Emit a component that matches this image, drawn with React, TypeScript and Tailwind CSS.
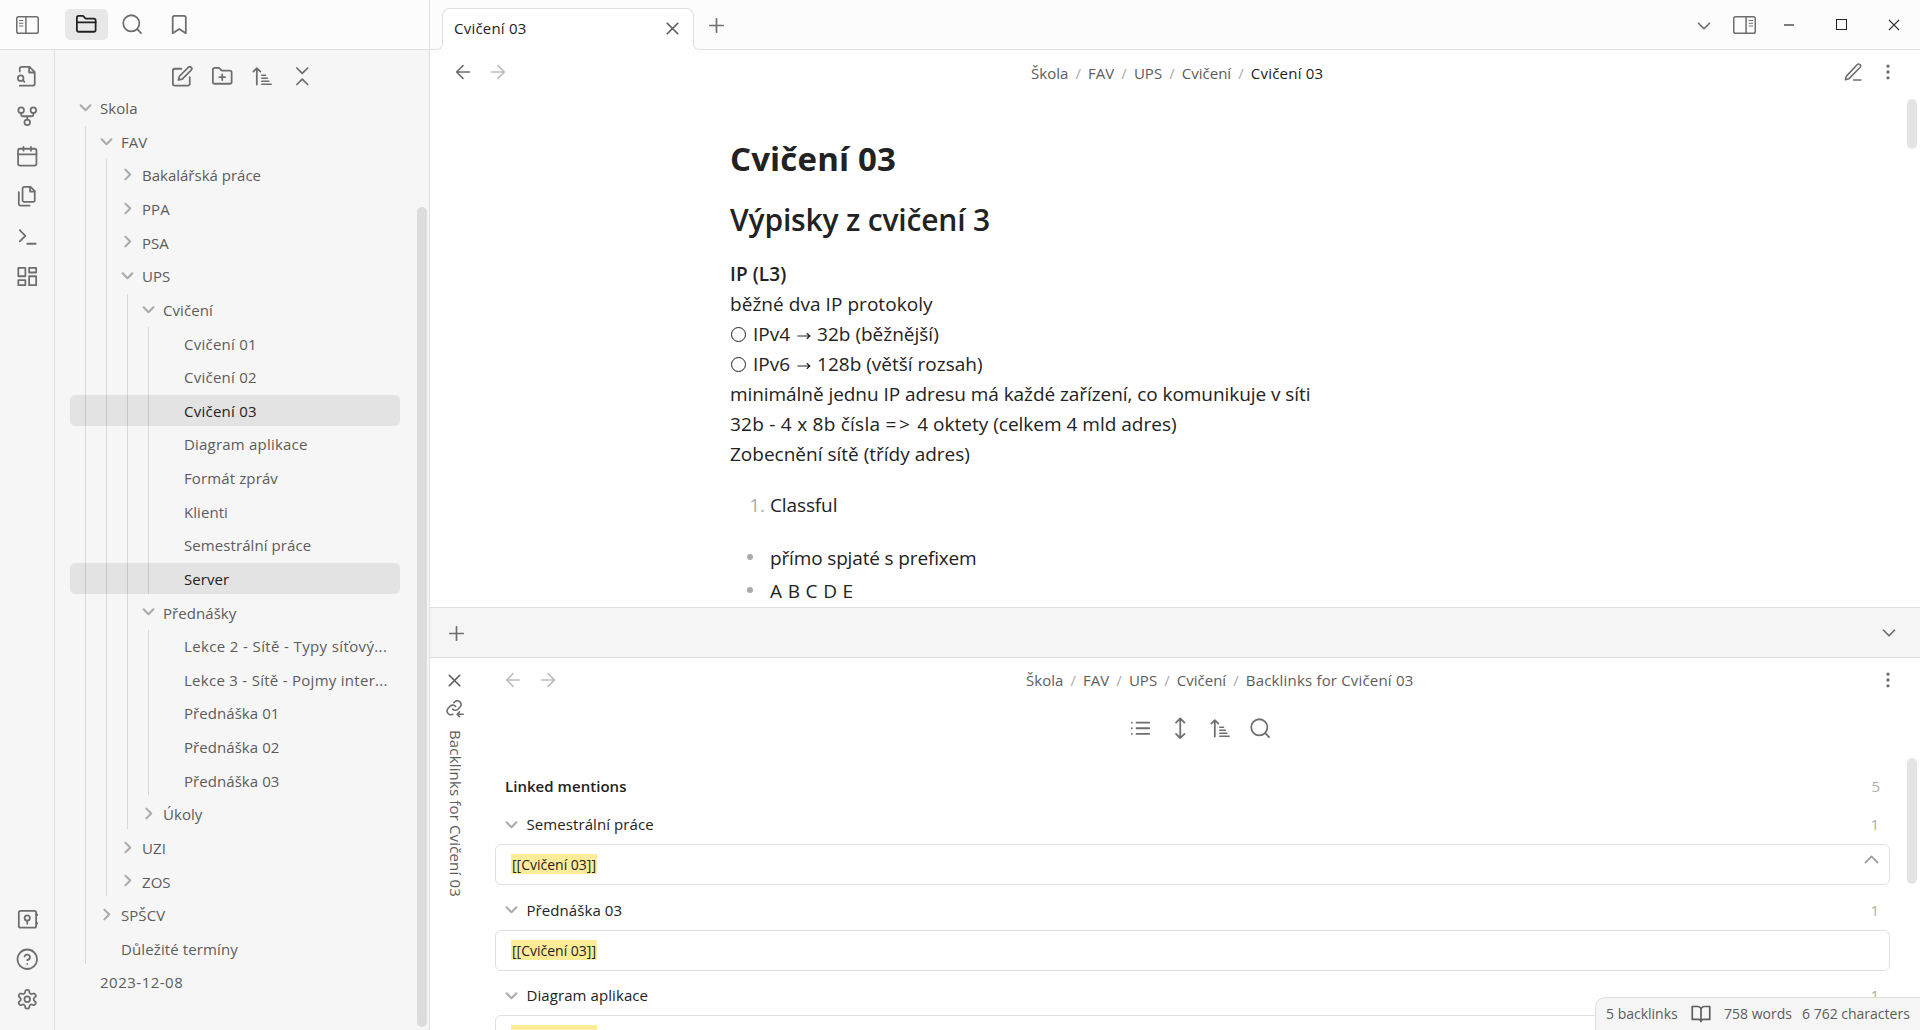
import React from "react";

type IconProps = { size?: number; sw?: number; className?: string; children: React.ReactNode };

/* Shared 24-unit stroked icon frame; sw is the stroke width in 24-unit space. */
function Icon({ size = 22.5, sw = 1.87, className = "", children }: IconProps) {
  return (
    <svg
      width={size}
      height={size}
      viewBox="0 0 24 24"
      fill="none"
      stroke="currentColor"
      strokeWidth={sw}
      strokeLinecap="round"
      strokeLinejoin="round"
      className={"shrink-0 " + className}
    >
      {children}
    </svg>
  );
}

const FOLDER =
  "M4 20h16a2 2 0 0 0 2-2V8a2 2 0 0 0-2-2h-7.93a2 2 0 0 1-1.66-.9l-.82-1.2A2 2 0 0 0 7.93 3H4a2 2 0 0 0-2 2v13c0 1.1.9 2 2 2Z";
const GEAR =
  "M12.22 2h-.44a2 2 0 0 0-2 2v.18a2 2 0 0 1-1 1.73l-.43.25a2 2 0 0 1-2 0l-.15-.08a2 2 0 0 0-2.73.73l-.22.38a2 2 0 0 0 .73 2.73l.15.1a2 2 0 0 1 1 1.72v.51a2 2 0 0 1-1 1.74l-.15.09a2 2 0 0 0-.73 2.73l.22.38a2 2 0 0 0 2.73.73l.15-.08a2 2 0 0 1 2 0l.43.25a2 2 0 0 1 1 1.73V20a2 2 0 0 0 2 2h.44a2 2 0 0 0 2-2v-.18a2 2 0 0 1 1-1.73l.43-.25a2 2 0 0 1 2 0l.15.08a2 2 0 0 0 2.73-.73l.22-.39a2 2 0 0 0-.73-2.73l-.15-.08a2 2 0 0 1-1-1.74v-.5a2 2 0 0 1 1-1.74l.15-.09a2 2 0 0 0 .73-2.73l-.22-.38a2 2 0 0 0-2.73-.73l-.15.08a2 2 0 0 1-2 0l-.43-.25a2 2 0 0 1-1-1.73V4a2 2 0 0 0-2-2z";

const SearchIcon = () => (
  <Icon>
    <circle cx="11" cy="11" r="8.6" />
    <path d="m21.4 21.4-4.2-4.2" />
  </Icon>
);
const SortIcon = () => (
  <Icon>
    <path d="m2.5 7 3.7-3.7L10 7M6.2 3.6v17.2" />
    <path d="M11.5 11h4M11.5 14.2h6M11.5 17.2h7.6M11.5 20.4h10" strokeWidth="1.6" />
  </Icon>
);
const CloseIcon = () => (
  <Icon size={21}>
    <path d="M18 6 6 18M6 6l12 12" />
  </Icon>
);
const PlusIcon = () => (
  <Icon size={23} sw={1.75}>
    <path d="M12 5v14M5 12h14" />
  </Icon>
);
const ChevronDown = () => (
  <Icon size={22}>
    <path d="m6 9 6 6 6-6" />
  </Icon>
);
const MoreIcon = () => (
  <Icon size={20} sw={2}>
    <circle cx="12" cy="12" r="1" fill="currentColor" />
    <circle cx="12" cy="5" r="1" fill="currentColor" />
    <circle cx="12" cy="19" r="1" fill="currentColor" />
  </Icon>
);
const ArrowLeft = ({ dim }: { dim?: boolean }) => (
  <Icon size={22} sw={1.75} className={dim ? "text-[#bdbdbd]" : "text-[#6e6e6e]"}>
    <path d="m12 19-7-7 7-7M19 12H5" />
  </Icon>
);
const ArrowRight = () => (
  <Icon size={22} sw={1.75} className="text-[#bdbdbd]">
    <path d="M5 12h14M12 5l7 7-7 7" />
  </Icon>
);
const Fold = ({ closed }: { closed?: boolean }) => (
  <Icon size={13} sw={3.9} className={"text-[#ababab] " + (closed ? "-rotate-90" : "")}>
    <path d="M3 8l9 9 9-9" />
  </Icon>
);
const PanelIcon = ({ right }: { right?: boolean }) => (
  <svg
    width="23"
    height="18"
    viewBox="0 0 23 18"
    fill="none"
    stroke="currentColor"
    className={right ? "-scale-x-100" : ""}
  >
    <rect x=".75" y=".75" width="21.5" height="16.5" rx="1.8" strokeWidth="1.5" />
    <path d="M9.9 1v16" strokeWidth="1.5" />
    <path d="M3 4.5h4.3M3 7.2h4.3M3 10h4.3" strokeWidth="1.1" />
  </svg>
);

type Node = {
  name: string;
  open?: boolean;
  closed?: boolean;
  selected?: boolean;
  spacing?: string;
  children?: Node[];
};

const TREE: Node[] = [
  {
    name: "Škola",
    open: true,
    children: [
      {
        name: "FAV",
        open: true,
        children: [
          { name: "Bakalářská práce", closed: true, spacing: "tracking-normal" },
          { name: "PPA", closed: true },
          { name: "PSA", closed: true },
          {
            name: "UPS",
            open: true,
            children: [
              {
                name: "Cvičení",
                open: true,
                children: [
                  { name: "Cvičení 01", spacing: "tracking-[0.25px]" },
                  { name: "Cvičení 02", spacing: "tracking-[0.25px]" },
                  { name: "Cvičení 03", selected: true, spacing: "tracking-[0.25px]" },
                  { name: "Diagram aplikace", spacing: "tracking-[0.2px]" },
                  { name: "Formát zpráv", spacing: "tracking-[0.12px]" },
                  { name: "Klienti" },
                  { name: "Semestrální práce", spacing: "tracking-[0.08px]" },
                  { name: "Server", selected: true },
                ],
              },
              {
                name: "Přednášky",
                open: true,
                children: [
                  { name: "Lekce 2 - Sítě - Typy síťový...", spacing: "tracking-[0.37px]" },
                  { name: "Lekce 3 - Sítě - Pojmy inter...", spacing: "tracking-[0.28px]" },
                  { name: "Přednáška 01" },
                  { name: "Přednáška 02" },
                  { name: "Přednáška 03" },
                ],
              },
              { name: "Úkoly", closed: true },
            ],
          },
          { name: "UZI", closed: true },
          { name: "ZOS", closed: true },
        ],
      },
      { name: "SPŠCV", closed: true },
      { name: "Důležité termíny", spacing: "tracking-[0.12px]" },
    ],
  },
  { name: "2023-12-08", spacing: "tracking-[0.5px]" },
];

function TreeItem({ node, depth }: { node: Node; depth: number }) {
  return (
    <div className="flex flex-col gap-[2.640px]">
      <div
        className={
          "flex h-[31px] items-center rounded-[5px] whitespace-nowrap " +
          (node.selected ? "bg-black/[0.075] text-[#222222]" : "text-[#5c5c5c]")
        }
        style={{ marginLeft: -21 * depth, paddingLeft: 8 + 21 * depth }}
      >
        <span className="flex w-[14px] justify-center">
          {(node.open || node.closed) && <Fold closed={node.closed} />}
        </span>
        <span className={"ml-[8px] pt-[1.500px] " + (node.spacing ?? "tracking-[0.06px]")}>{node.name}</span>
      </div>
      {node.children && (
        <div className="ml-[15px] flex flex-col gap-[2.640px] border-l border-[#d9d9d9] pl-[5px]">
          {node.children.map((c) => (
            <TreeItem key={c.name} node={c} depth={depth + 1} />
          ))}
        </div>
      )}
    </div>
  );
}

function Ribbon() {
  return (
    <nav className="flex w-[55px] shrink-0 flex-col items-center justify-between border-r border-[#e0e0e0] pt-[15.400px] pr-[0.500px] pb-[20px] text-[#6e6e6e]">
      <div className="flex flex-col gap-[17.500px]">
        <Icon>
          <path d="M4 22h14a2 2 0 0 0 2-2V7.5L14.5 2H6a2 2 0 0 0-2 2v3M14 2v6h6" />
          <circle cx="5" cy="14" r="3" />
          <path d="m9 18-1.5-1.5" />
        </Icon>
        <Icon>
          <circle cx="12" cy="18.5" r="3" />
          <circle cx="5.5" cy="5.5" r="3" />
          <circle cx="18.5" cy="5.5" r="3" />
          <path d="M18.5 8.5V10a2 2 0 0 1-2 2h-9a2 2 0 0 1-2-2V8.5M12 12v3.5" />
        </Icon>
        <Icon>
          <rect x="2.2" y="4" width="19.6" height="18" rx="2" />
          <path d="M16 2v4M8 2v4M2.2 10h19.6" />
        </Icon>
        <Icon>
          <path d="M15.5 2H8.6c-.4 0-.8.2-1.1.5-.3.3-.5.7-.5 1.1v12.8c0 .4.2.8.5 1.1.3.3.7.5 1.1.5h9.8c.4 0 .8-.2 1.1-.5.3-.3.5-.7.5-1.1V6.5L15.5 2z" />
          <path d="M3 7.6v12.8c0 .4.2.8.5 1.1.3.3.7.5 1.1.5h9.8M15 2v5h5" />
        </Icon>
        <Icon>
          <path d="m4 17.500 6-6-6-6M12 20h9" />
        </Icon>
        <Icon>
          <path d="M2.500 3h7.500v9H2.500zM14 3h7.500v5H14zM14 12h7.500v9.500H14zM2.500 16.200h7.500v5.300H2.500z" />
        </Icon>
      </div>
      <div className="flex flex-col gap-[17.400px]">
        <Icon>
          <rect x="3" y="3" width="18.5" height="18" rx="1.8" />
          <circle cx="12" cy="10.6" r="2.8" />
          <path d="M12 13.4v3.4M21.5 7.2h1.6M21.5 16.5h1.6" />
        </Icon>
        <Icon>
          <circle cx="12" cy="12" r="10.4" />
          <path d="M9.09 9a3 3 0 0 1 5.83 1c0 2-3 3-3 3M12 17h.01" />
        </Icon>
        <Icon>
          <path d={GEAR} />
          <circle cx="12" cy="12" r="3" />
        </Icon>
      </div>
    </nav>
  );
}

function Sidebar() {
  return (
    <aside className="flex w-[430px] shrink-0 flex-col border-r border-[#e0e0e0] bg-[#f6f6f6]">
      <div className="flex h-[50px] shrink-0 items-center border-b border-[#e0e0e0] bg-[#fcfcfc] pl-[16px] text-[#6e6e6e]">
        <PanelIcon />
        <div className="ml-[26px] flex gap-[3px]">
          <div className="flex h-[31px] w-[43px] items-center justify-center rounded-[5px] bg-[#e8e8e8] text-[#222222]">
            <Icon>
              <path d={FOLDER} />
              <path d="M2 10h20" />
            </Icon>
          </div>
          <div className="flex h-[31px] w-[43px] items-center justify-center">
            <SearchIcon />
          </div>
          <div className="flex h-[31px] w-[43px] items-center justify-center pl-px">
            <Icon>
              <path d="m19 21.500-7-4.500-7 4.500V5a2 2 0 0 1 2-2h10a2 2 0 0 1 2 2v16.500z" />
            </Icon>
          </div>
        </div>
      </div>
      <div className="flex min-h-0 flex-1">
        <Ribbon />
        <div className="relative flex min-w-0 flex-1 flex-col">
          <div className="flex h-[53px] shrink-0 items-center justify-center gap-[17.600px] pl-[1px] text-[#6e6e6e]">
            <Icon>
              <path d="M11 4H4a2 2 0 0 0-2 2v14a2 2 0 0 0 2 2h14a2 2 0 0 0 2-2v-7" />
              <path d="M18.5 2.5a2.12 2.12 0 0 1 3 3L12 15l-4 1 1-4Z" />
            </Icon>
            <Icon>
              <path d={FOLDER} />
              <path d="M12 10v6M9 13h6" />
            </Icon>
            <SortIcon />
            <Icon>
              <path d="m6.200 20.800 5.800-5.800 5.800 5.800M6.200 3.200l5.800 5.800 5.800-5.800" />
            </Icon>
          </div>
          <div className="min-h-0 flex-1 overflow-hidden pr-[29px] pl-[15px]">
            <div className="-mt-[11.100px] flex flex-col gap-[2.640px]">
              {TREE.map((n) => (
                <TreeItem key={n.name} node={n} depth={0} />
              ))}
            </div>
          </div>
          <div className="absolute top-[157px] right-[2px] h-[820px] w-[10px] rounded-full bg-[#dcdcdc]" />
        </div>
      </div>
    </aside>
  );
}

function Crumbs({ items, last, active }: { items: string[]; last: string; active?: boolean }) {
  return (
    <div className="flex whitespace-nowrap text-[#5c5c5c]">
      {items.map((c) => (
        <React.Fragment key={c}>
          <span>{c}</span>
          <span className="w-[19.700px] text-center text-[#ababab]">/</span>
        </React.Fragment>
      ))}
      <span className={active ? "tracking-[0.22px] text-[#222222]" : "tracking-[0.18px]"}>{last}</span>
    </div>
  );
}

function TabBar() {
  return (
    <div className="flex h-[50px] shrink-0 items-end bg-[#fcfcfc]">
      <div className="h-[50px] w-[6px] border-b border-[#e0e0e0]" />
      <div className="relative mx-[6px] flex h-[42px] w-[252px] items-center justify-between rounded-t-[8px] border border-b-0 border-[#e0e0e0] bg-white pr-[10px] pb-[3px] pl-[11px] text-[#222222]">
        <span className="tracking-[0.22px]">Cvičení 03</span>
        <span className="text-[#5c5c5c]">
          <CloseIcon />
        </span>
        <span className="absolute bottom-0 -left-[7px] h-[7px] w-[7px] bg-white">
          <span className="block h-[7px] w-[7px] rounded-br-[6px] border-r border-b border-[#e0e0e0] bg-[#fcfcfc]" />
        </span>
        <span className="absolute -right-[7px] bottom-0 h-[7px] w-[7px] bg-white">
          <span className="block h-[7px] w-[7px] rounded-bl-[6px] border-b border-l border-[#e0e0e0] bg-[#fcfcfc]" />
        </span>
      </div>
      <div className="flex h-[50px] flex-1 items-center justify-between border-b border-[#e0e0e0] pr-[20px] pl-[5px] text-[#6e6e6e]">
        <span className="pt-[2px]">
          <PlusIcon />
        </span>
        <div className="flex items-center">
          <span className="mr-[18px] pt-[2px]">
            <ChevronDown />
          </span>
          <PanelIcon right />
          <span className="ml-[28px] h-[2px] w-[10px] bg-[#7d7d7d]" />
          <span className="ml-[42px] h-[11px] w-[11px] border border-[#222222]" />
          <svg width="12" height="12" viewBox="0 0 12 12" stroke="#333" strokeWidth="1.1" className="ml-[41.500px]">
            <path d="M1 1l10 10M11 1 1 11" />
          </svg>
        </div>
      </div>
    </div>
  );
}

function Editor() {
  return (
    <section className="relative flex min-h-0 flex-1 flex-col overflow-hidden bg-white">
      <div className="grid h-[44px] shrink-0 grid-cols-[1fr_auto_1fr] items-center pr-[22.500px] pl-[22px]">
        <div className="flex gap-[13px]">
          <ArrowLeft />
          <ArrowRight />
        </div>
        <div className="pt-px pl-[5px]">
          <Crumbs items={["Škola", "FAV", "UPS", "Cvičení"]} last="Cvičení 03" active />
        </div>
        <div className="flex justify-end gap-[14.500px] text-[#6e6e6e]">
          <Icon size={20.5}>
            <path d="M12.500 21H21M16.500 3.200a2.120 2.120 0 0 1 3.400 3.200L7 19.500l-4.200 1.200 1.200-4.200Z" />
          </Icon>
          <MoreIcon />
        </div>
      </div>
      <article className="ml-[300px] pt-[45px] text-[19px] leading-[30px] whitespace-nowrap text-[#222222]">
        <h1 className="text-[33px] leading-[40px] font-bold tracking-[0.16px]">Cvičení 03</h1>
        <h2 className="mt-[21px] text-[30px] leading-[40px] font-semibold tracking-[-0.18px]">Výpisky z cvičení 3</h2>
        <div className="mt-[19px]">
          <p className="font-semibold tracking-[0.1px]">IP (L3)</p>
          <p className="tracking-[0.05px]">běžné dva IP protokoly</p>
          {[
            ["IPv4", "32b (běžnější)"],
            ["IPv6", "128b (větší rozsah)"],
          ].map(([a, b]) => (
            <p key={a} className="flex items-center">
              <span className="mr-[7px] ml-px h-[15px] w-[15px] rounded-full border-[1.200px] border-[#222222]" />
              <span>{a}</span>
              <svg width="14" height="8" viewBox="0 0 14 8" fill="none" stroke="#222" strokeWidth="1.2" className="mx-[6.500px] mt-[3px]">
                <path d="M.5 4h12M9.800 1.200 12.800 4 9.800 6.800" />
              </svg>
              <span>{b}</span>
            </p>
          ))}
          <p className="tracking-[-0.06px]">minimálně jednu IP adresu má každé zařízení, co komunikuje v síti</p>
          <p>
            <span className="tracking-[0.25px]">32b - 4 x 8b čísla </span>
            <span className="tracking-[2.600px]">=&gt;</span> 4 oktety (celkem 4 mld adres)
          </p>
          <p>Zobecnění sítě (třídy adres)</p>
        </div>
        <ol className="mt-[21px] flex">
          <li className="flex">
            <span className="w-[40px] pr-[5px] text-right text-[#ababab]">1.</span>
            <span className="tracking-[-0.12px]">Classful</span>
          </li>
        </ol>
        <ul className="mt-[23px] flex flex-col gap-[3px]">
          {[
            ["přímo spjaté s prefixem", "tracking-[-0.15px]"],
            ["A B C D E", "tracking-[0.350px]"],
          ].map(([t, spacing]) => (
            <li key={t} className="flex items-center pl-[17px]">
              <span className="-mt-[3px] mr-[17px] h-[6px] w-[6px] rounded-full bg-[#ababab]" />
              <span className={spacing}>{t}</span>
            </li>
          ))}
        </ul>
      </article>
      <div className="absolute top-[49px] right-[3px] h-[50px] w-[10px] rounded-full bg-[#e4e4e4]" />
    </section>
  );
}

function Mention({ title, hovered }: { title: string; hovered?: boolean }) {
  return (
    <div className="mb-[6.700px]">
      <div className="flex h-[38px] items-center justify-between pr-[10px] pb-[2px] pl-[10px]">
        <span className="flex items-center">
          <Fold />
          <span className="ml-[8.500px] tracking-[0.080px] text-[#222222]">{title}</span>
        </span>
        <span className="pr-[1px] text-[#ababab]">1</span>
      </div>
      <div className="flex h-[41px] items-start justify-between rounded-[6px] border border-[#e0e0e0] pt-[9px] pr-[7px] pl-[15px]">
        <span className="h-[20px] bg-[#ffec99] px-[1px] text-[14px] leading-[22px] text-[#222222]">[[Cvičení 03]]</span>
        {hovered && (
          <Icon size={21} className="-mt-[5px] text-[#9a9a9a]">
            <path d="m5 15.500 7-7 7 7" />
          </Icon>
        )}
      </div>
    </div>
  );
}

function BacklinksPane() {
  return (
    <section className="flex h-[423px] shrink-0 flex-col">
      <div className="flex h-[51px] shrink-0 items-center justify-between border-y border-[#e0e0e0] bg-[#f5f5f5] pt-px pr-[20px] pl-[15px] text-[#6e6e6e]">
        <PlusIcon />
        <ChevronDown />
      </div>
      <div className="flex min-h-0 flex-1 bg-white">
        <div className="flex w-[50px] shrink-0 flex-col items-center pt-[11.500px] pr-[1px] text-[#5c5c5c]">
          <CloseIcon />
          <Icon size={18} sw={2.1} className="mt-[9.500px] text-[#6e6e6e]">
            <path d="M9.200 12.800a5 5 0 0 0 7.300.3l3-3.200a5 5 0 0 0-7-7l-1.600 1.600" transform="translate(-.5 -.8)" />
            <path d="M13.300 9.400a5 5 0 0 0-7.300-.3L3 12.300a5 5 0 0 0 6.600 7.300" transform="translate(-.5 -.8)" />
            <path d="M23 19h-8M18 15.800 14.800 19l3.200 3.200" />
          </Icon>
          <span className="mt-[12px] ml-[2px] tracking-[0.150px] whitespace-nowrap [writing-mode:vertical-rl]">
            Backlinks for Cvičení 03
          </span>
        </div>
        <div className="relative flex min-w-0 flex-1 flex-col">
          <div className="grid h-[44px] shrink-0 grid-cols-[1fr_auto_1fr] items-center pr-[22.500px] pl-[22px]">
            <div className="flex gap-[13px]">
              <ArrowLeft dim />
              <ArrowRight />
            </div>
            <div className="pl-[40px]">
              <Crumbs items={["Škola", "FAV", "UPS", "Cvičení"]} last="Backlinks for Cvičení 03" />
            </div>
            <div className="flex justify-end text-[#6e6e6e]">
              <MoreIcon />
            </div>
          </div>
          <div className="flex h-[52px] shrink-0 items-center justify-center gap-[17.500px] pl-[1px] text-[#6e6e6e]">
            <Icon>
              <path d="M8 6h13.500M8 12h13.500M8 18h13.500M3 6h.01M3 12h.01M3 18h.01" />
            </Icon>
            <Icon>
              <path d="m7.500 18 4.500 4.500 4.500-4.500M7.500 6 12 1.500 16.500 6M12 2v20" />
            </Icon>
            <SortIcon />
            <SearchIcon />
          </div>
          <div className="min-h-0 flex-1 overflow-hidden pt-[14px] pr-[30px] pl-[15px]">
            <div className="mb-[2px] flex h-[36px] items-center justify-between pr-[10px] pl-[10px]">
              <span className="font-semibold tracking-[0.040px] text-[#222222]">Linked mentions</span>
              <span className="text-[#ababab]">5</span>
            </div>
            <Mention title="Semestrální práce" hovered />
            <Mention title="Přednáška 03" />
            <Mention title="Diagram aplikace" />
          </div>
          <div className="absolute top-[100px] right-[3px] h-[126px] w-[10px] rounded-full bg-[#e4e4e4]" />
        </div>
      </div>
    </section>
  );
}

export default function App() {
  return (
    <div className="relative flex h-[1030px] w-[1920px] overflow-hidden bg-white font-['Open_Sans','Noto_Sans',sans-serif] text-[15px] leading-[20px]">
      <Sidebar />
      <main className="flex min-w-0 flex-1 flex-col">
        <TabBar />
        <Editor />
        <BacklinksPane />
      </main>
      <footer className="absolute right-0 bottom-0 flex h-[33px] w-[325px] items-center rounded-tl-[10px] border-t border-l border-[#e0e0e0] bg-[#f5f5f5] pl-[10px] text-[14px] whitespace-nowrap text-[#5c5c5c]">
        <span className="w-[85px]">5 backlinks</span>
        <Icon size={20} sw={2}>
          <path d="M1.500 3H8a4 4 0 0 1 4 4v14a3 3 0 0 0-3-2.500H1.500zM22.500 3H16a4 4 0 0 0-4 4v14a3 3 0 0 1 3-2.500h7.500z" />
        </Icon>
        <span className="ml-[13px] w-[78px]">758 words</span>
        <span>6 762 characters</span>
      </footer>
    </div>
  );
}
